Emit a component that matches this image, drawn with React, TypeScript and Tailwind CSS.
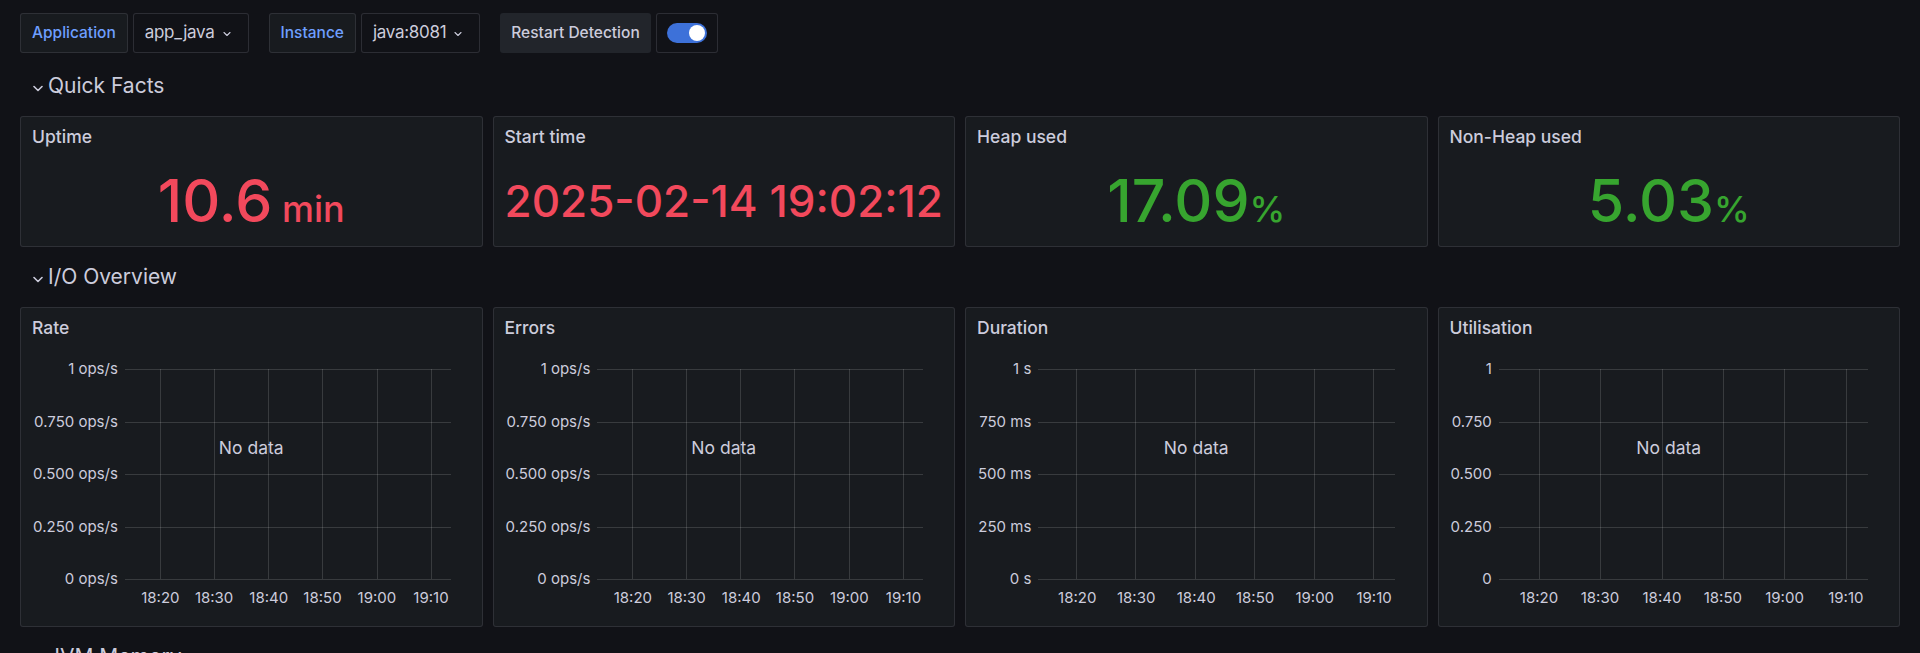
import { ChevronDown } from "lucide-react";

type Axis = { title: string; labels: string[] };

const ticks = [
  { t: "18:20", f: 0.109 },
  { t: "18:30", f: 0.274 },
  { t: "18:40", f: 0.442 },
  { t: "18:50", f: 0.607 },
  { t: "19:00", f: 0.774 },
  { t: "19:10", f: 0.94 },
];

const charts: Axis[] = [
  { title: "Rate", labels: ["1 ops/s", "0.750 ops/s", "0.500 ops/s", "0.250 ops/s", "0 ops/s"] },
  { title: "Errors", labels: ["1 ops/s", "0.750 ops/s", "0.500 ops/s", "0.250 ops/s", "0 ops/s"] },
  { title: "Duration", labels: ["1 s", "750 ms", "500 ms", "250 ms", "0 s"] },
  { title: "Utilisation", labels: ["1", "0.750", "0.500", "0.250", "0"] },
];

const stats = [
  { title: "Uptime", value: "10.6", unit: " min", color: "text-[#f2495c]" },
  { title: "Start time", value: "2025-02-14 19:02:12", unit: "", color: "text-[#f2495c]", small: true },
  { title: "Heap used", value: "17.09", unit: "%", color: "text-[#37a52f]" },
  { title: "Non-Heap used", value: "5.03", unit: "%", color: "text-[#37a52f]" },
];

const RowHeader = ({ title }: { title: string }) => (
  <div className="flex h-10 items-center pl-[13px] text-[21px] text-[#ccccdc]">
    <svg width="10" height="7" viewBox="0 0 10 7" className="mt-[4px]" fill="none">
      <path d="M1 1.5l4 4 4-4" stroke="#ccccdc" strokeWidth="1.6" strokeLinecap="round" strokeLinejoin="round" />
    </svg>
    <span className="ml-[5px]">{title}</span>
  </div>
);

const Label = ({ text }: { text: string }) => (
  <div className="flex items-center rounded-[3px] border border-[#ccccdc1f] bg-[#181b1f] px-[11px] text-[15.5px] font-medium text-[#6e9fff]">
    {text}
  </div>
);

const Select = ({ text }: { text: string }) => (
  <div className="ml-[5px] flex items-center rounded-[3px] border border-[#ccccdc26] bg-[#111217] pl-[11px] pr-[15px] text-[17px] tracking-[-0.3px] text-[#ccccdc]">
    <span>{text}</span>
    <ChevronDown size={12} strokeWidth={2.2} className="ml-[6px] mt-[1px]" />
  </div>
);

const Chart = ({ title, labels }: Axis) => (
  <div className="relative flex h-[320px] flex-col rounded-[3px] border border-[#ccccdc1f] bg-[#181b1f]">
    <div className="flex h-10 items-center px-[11px] text-[17.5px] font-medium text-[#ccccdc]">{title}</div>
    <div className="flex items-start pl-[12px] pr-[31px] pt-[21px]">
      <div className="-mt-[9px] flex h-[228px] flex-col justify-between text-right text-[15px] leading-[18px] text-[#ccccdc]">
        {labels.map((l) => (
          <div key={l}>{l}</div>
        ))}
      </div>
      <div className="ml-[7px] flex flex-1 flex-col">
        <svg className="h-[211px] w-full" shapeRendering="crispEdges">
          {[0, 52.5, 105, 157.5, 210].map((y) => (
            <line key={y} x1="0" x2="100%" y1={y + 0.5} y2={y + 0.5} stroke="#ffffff24" strokeWidth="1" />
          ))}
          {ticks.map((t) => (
            <line key={t.t} x1={`${t.f * 100}%`} x2={`${t.f * 100}%`} y1="0" y2="210" stroke="#ffffff24" strokeWidth="1" />
          ))}
        </svg>
        <div className="relative mt-[8px] h-[20px] text-[15px] leading-[20px] text-[#ccccdc]">
          {ticks.map((t) => (
            <span key={t.t} className="absolute top-0 -translate-x-1/2" style={{ left: `${t.f * 100}%` }}>
              {t.t}
            </span>
          ))}
        </div>
      </div>
    </div>
    <div className="absolute left-0 right-0 top-[129px] text-center text-[17.5px] leading-[22px] text-[#ccccdc]">No data</div>
  </div>
);

export default function App() {
  return (
    <div className="h-[653px] overflow-hidden bg-[#111217] px-5 pt-[13px] font-['Inter',sans-serif] text-[#ccccdc]">
      {/* variables bar */}
      <div className="flex h-10">
        <Label text="Application" />
        <Select text="app_java" />
        <div className="ml-5 flex">
          <Label text="Instance" />
          <Select text="java:8081" />
        </div>
        <div className="ml-5 flex">
          <div className="flex items-center rounded-[3px] bg-[#22252b] px-[11px] text-[15.5px] font-medium text-[#ccccdc]">
            Restart Detection
          </div>
          <div className="ml-[5px] flex w-[62px] items-center justify-center rounded-[3px] border border-[#ccccdc26] bg-[#111217]">
            <div className="flex h-5 w-10 items-center justify-end rounded-full bg-[#3d71d9] pr-[2px]">
              <div className="h-4 w-4 rounded-full bg-white" />
            </div>
          </div>
        </div>
      </div>

      <div className="mt-[13px]">
        <RowHeader title="Quick Facts" />
      </div>
      <div className="mt-[10px] grid grid-cols-4 gap-[10px]">
        {stats.map((s) => (
          <div key={s.title} className="flex h-[131px] flex-col rounded-[3px] border border-[#ccccdc1f] bg-[#181b1f]">
            <div className="flex h-10 items-center px-[11px] text-[17.5px] font-medium text-[#ccccdc]">{s.title}</div>
            <div className={`flex flex-1 items-center justify-center pb-[2px] ${s.color}`}>
              <span className={`whitespace-pre leading-none font-medium ${s.small ? "text-[44px]" : "text-[59px]"}`}>
                {s.value}
                {s.unit && <span className="text-[36px]">{s.unit}</span>}
              </span>
            </div>
          </div>
        ))}
      </div>

      <div className="mt-[10px]">
        <RowHeader title="I/O Overview" />
      </div>
      <div className="mt-[10px] grid grid-cols-4 gap-[10px]">
        {charts.map((c) => (
          <Chart key={c.title} {...c} />
        ))}
      </div>

      <div className="mt-[10px]">
        <RowHeader title="JVM Memory" />
      </div>
    </div>
  );
}
